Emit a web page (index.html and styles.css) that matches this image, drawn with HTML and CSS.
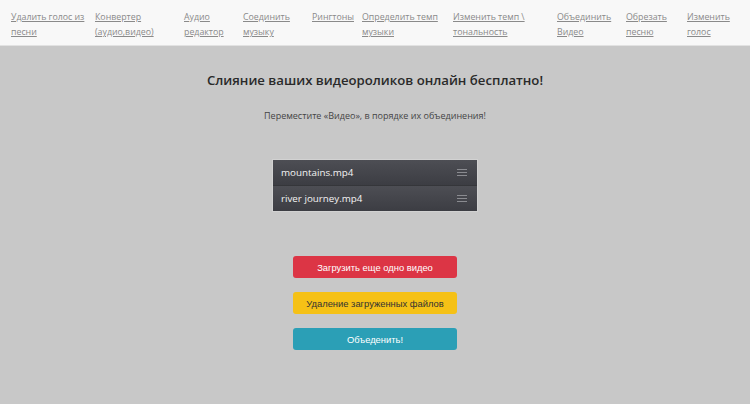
FILE: index.html
```html
<!DOCTYPE html>
<html lang="ru">
<head>
  <meta charset="UTF-8" />
  <meta name="viewport" content="width=device-width, initial-scale=1.0"/>
  <title>Объединить видео онлайн</title>
  <link rel="stylesheet" href="styles.css">
</head>
<body>
  <div class="topnav">
    <a href="#">Удалить голос из песни</a>
    <a href="#">Конвертер (аудио,видео)</a>
    <a href="#">Аудио редактор</a>
    <a href="#">Соединить музыку</a>
    <a href="#">Рингтоны</a>
    <a href="#">Определить темп музыки</a>
    <a href="#">Изменить темп \ тональность</a>
    <a href="#">Объединить Видео</a>
    <a href="#">Обрезать песню</a>
    <a href="#">Изменить голос</a>
  </div>

  <div class="main">
    <h1>Слияние ваших видеороликов онлайн бесплатно!</h1>
    <p class="note">Переместите «Видео», в порядке их объединения!</p>

    <ul class="files">
      <li><span>mountains.mp4</span><i class="grip"></i></li>
      <li><span>river journey.mp4</span><i class="grip"></i></li>
    </ul>

    <div class="actions">
      <button class="btn red">Загрузить еще одно видео</button>
      <button class="btn yellow">Удаление загруженных файлов</button>
      <button class="btn teal">Объеденить!</button>
    </div>
  </div>
</body>
</html>
```

FILE: styles.css
```css
body {
  margin: 0;
  font-family: 'Open Sans', sans-serif;
  background-color: #c8c8c8;
  color: #333;
}
.topnav {
  display: grid;
  grid-template-columns: 84px 89px 59px 69px 50px 91px 104px 69px 61px 1fr;
  height: 46px;
  box-sizing: border-box;
  padding: 10px 0 0 11px;
  background: #f8f8f8;
  border-bottom: 1px solid #e2e2e2;
}
.topnav a {
  font-size: 8.8px;
  line-height: 15px;
  color: #8a8a8a;
  text-decoration: underline;
  padding-right: 2px;
}
.main {
  text-align: center;
}
h1 {
  margin: 0;
  padding-top: 23px;
  font-size: 13.2px;
  font-weight: 600;
  line-height: 22px;
  color: #2a2a2a;
}
.note {
  margin: 18px 0 0;
  font-size: 9px;
  line-height: 14px;
  color: #444;
}
.files {
  list-style: none;
  width: 204px;
  margin: 36px auto 0;
  padding: 0;
  border: 1px solid #d2d2d2;
  background: #3a3b40;
}
.files li {
  display: flex;
  align-items: center;
  justify-content: space-between;
  height: 25px;
  padding: 0 10px 0 8px;
  background: linear-gradient(#4d4e54, #3c3d43);
  border-bottom: 1px solid #35363a;
  color: #f4f4f4;
  font-size: 9.8px;
  text-align: left;
}
.files li:last-child {
  border-bottom: none;
}
.grip {
  width: 10px;
  height: 7px;
  border-top: 1px solid #8a8b90;
  border-bottom: 1px solid #8a8b90;
  position: relative;
  box-sizing: border-box;
}
.grip::after {
  content: "";
  position: absolute;
  left: 0;
  right: 0;
  top: 2px;
  border-top: 1px solid #8a8b90;
}
.actions {
  display: flex;
  flex-direction: column;
  align-items: center;
  gap: 14px;
  margin-top: 44px;
}
.btn {
  width: 164px;
  height: 22px;
  border: none;
  border-radius: 3px;
  font-family: 'Liberation Sans', Arial, sans-serif;
  font-size: 9.4px;
  cursor: pointer;
}
.red {
  background-color: #dc3545;
  color: #fff;
}
.yellow {
  background-color: #f5c116;
  color: #333;
}
.teal {
  background-color: #2b9fb6;
  color: #fff;
}
```
